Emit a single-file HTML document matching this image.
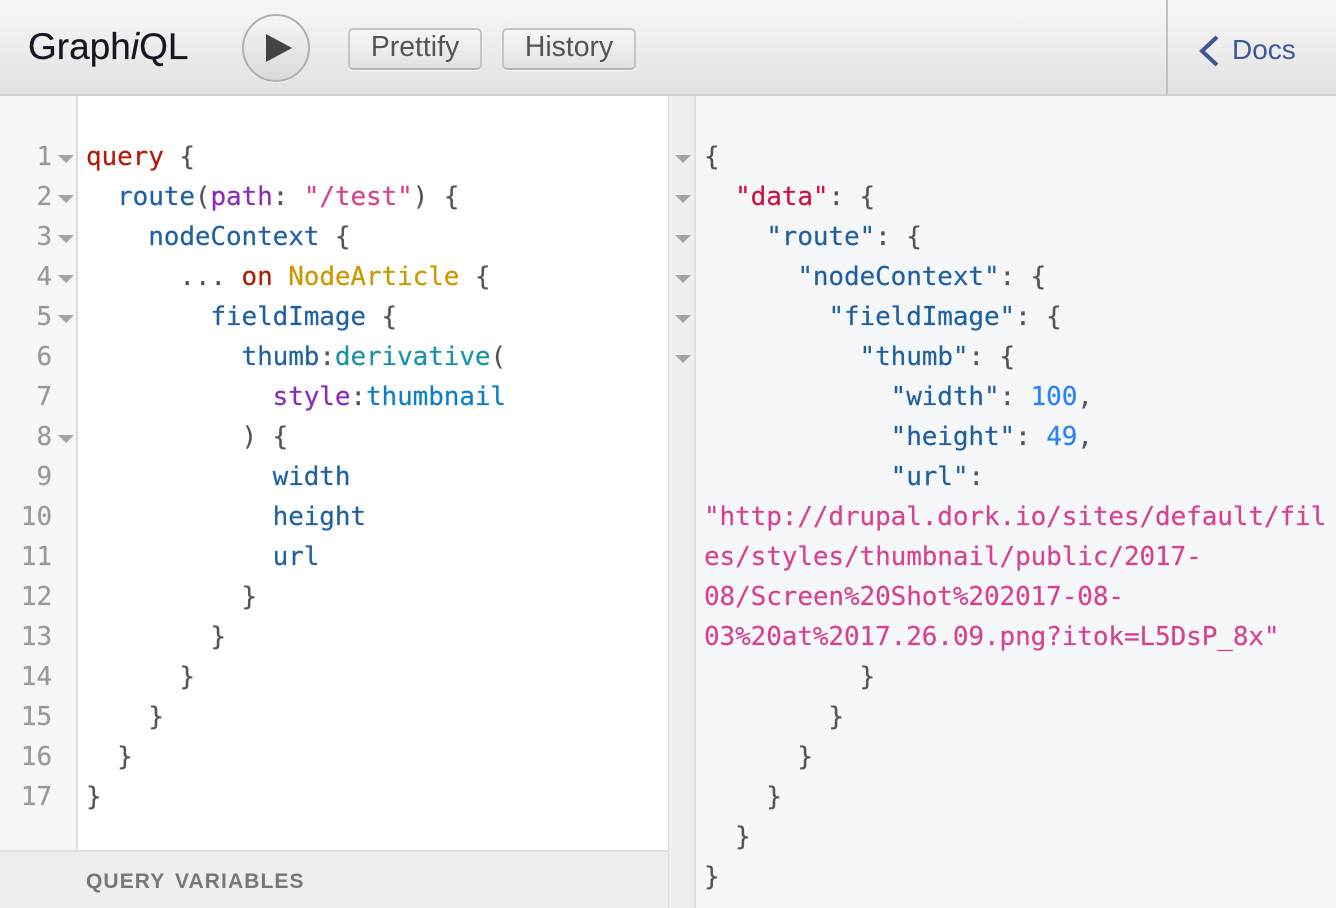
<!DOCTYPE html>
<html><head><meta charset="utf-8">
<style>
html,body{margin:0;padding:0;width:1336px;height:908px;overflow:hidden;background:#f6f7f8}
.abs{position:absolute}
#bar{left:0;top:0;width:1336px;height:94px;background:linear-gradient(#f7f7f7,#e2e2e2);border-bottom:2px solid #d0d0d0}
#logo{left:28px;top:25px;font:37px/44px "Liberation Sans",sans-serif;color:#141823;-webkit-text-stroke:.2px #141823}
.btn{top:28px;height:38px;box-sizing:content-box;border:2px solid #c4c4c4;border-bottom-color:#b5b5b5;border-radius:5px;background:linear-gradient(#f7f7f7,#e2e2e2);box-shadow:0 1px 0 #fff;color:#555;font:28.4px/35px "Liberation Sans",sans-serif;text-align:center}
#sep{left:1166px;top:0;width:2px;height:94px;background:#c0c0c0}
#docs{left:1232px;top:30px;font:28px/40px "Liberation Sans",sans-serif;color:#3b5998}
#gut{left:0;top:96px;width:76px;height:755px;background:#f7f7f7;border-right:2px solid #ddd}
#ed{left:78px;top:96px;width:590px;height:755px;background:#fff}
#qv{left:0;top:850px;width:668px;height:58px;background:#eee;border-top:2px solid #e0e0e0;box-sizing:border-box}
#qvt{left:86px;top:869px;font:bold 21px/26px "Liberation Sans",sans-serif;color:#777;letter-spacing:1.1px;word-spacing:3px}
#div{left:668px;top:96px;width:25px;height:812px;background:#eee;border-left:1px solid #e0e0e0;border-right:2px solid #e0e0e0;box-sizing:content-box}
.l,.n{position:absolute;font:26px/40px "DejaVu Sans Mono","Liberation Mono",monospace;white-space:pre;height:40px;color:#555;letter-spacing:-.1px;-webkit-text-stroke:.2px currentColor}
.n{left:0;width:52px;text-align:right;color:#999}
.k{color:#b11a04}.f{color:#1f61a0}.a{color:#8b2bb9}.s{color:#d64292}.t{color:#ca9800}
.al{color:#1c92a9}.v{color:#0b7fc7}.d{color:#d01040}.i{color:#2882f9}
.tri{position:absolute;width:0;height:0;border-left:8px solid transparent;border-right:8px solid transparent;border-top:8px solid #a5a5a5}
</style></head><body>
<div class="abs" id="bar"></div>
<div class="abs" id="logo">Graph<i>i</i>QL</div>
<svg class="abs" style="left:240px;top:12px" width="72" height="72" viewBox="0 0 72 72">
<defs><linearGradient id="g" x1="0" y1="0" x2="0" y2="1"><stop offset="0" stop-color="#f7f7f7"/><stop offset="1" stop-color="#d9d9d9"/></linearGradient></defs>
<circle cx="36" cy="37" r="33.5" fill="#fff"/>
<circle cx="36" cy="36" r="33" fill="url(#g)" stroke="#b0b0b0" stroke-width="2"/>
<path d="M26 22 L52 36 L26 50 Z" fill="#444"/>
</svg>
<div class="abs btn" style="left:348px;width:130px">Prettify</div>
<div class="abs btn" style="left:502px;width:130px">History</div>
<div class="abs" id="sep"></div>
<svg class="abs" style="left:1196px;top:34px" width="26" height="34" viewBox="0 0 26 34"><path d="M21 3 L6 17 L21 31" fill="none" stroke="#3b5998" stroke-width="4"/></svg>
<div class="abs" id="docs">Docs</div>

<div class="abs" id="gut"></div>
<div class="abs" id="ed"></div>
<div class="abs" id="qv"></div>
<div class="abs" id="qvt">QUERY VARIABLES</div>
<div class="abs" id="div"></div>

<div class="n" style="top:137px">1</div>
<div class="n" style="top:177px">2</div>
<div class="n" style="top:217px">3</div>
<div class="n" style="top:257px">4</div>
<div class="n" style="top:297px">5</div>
<div class="n" style="top:337px">6</div>
<div class="n" style="top:377px">7</div>
<div class="n" style="top:417px">8</div>
<div class="n" style="top:457px">9</div>
<div class="n" style="top:497px">10</div>
<div class="n" style="top:537px">11</div>
<div class="n" style="top:577px">12</div>
<div class="n" style="top:617px">13</div>
<div class="n" style="top:657px">14</div>
<div class="n" style="top:697px">15</div>
<div class="n" style="top:737px">16</div>
<div class="n" style="top:777px">17</div>

<div class="tri" style="left:58px;top:155px"></div>
<div class="tri" style="left:58px;top:195px"></div>
<div class="tri" style="left:58px;top:235px"></div>
<div class="tri" style="left:58px;top:275px"></div>
<div class="tri" style="left:58px;top:315px"></div>
<div class="tri" style="left:58px;top:435px"></div>

<div class="l" style="left:86px;top:137px"><span class="k">query</span> {</div>
<div class="l" style="left:86px;top:177px">  <span class="f">route</span>(<span class="a">path</span>: <span class="s">"/test"</span>) {</div>
<div class="l" style="left:86px;top:217px">    <span class="f">nodeContext</span> {</div>
<div class="l" style="left:86px;top:257px">      ... <span class="k">on</span> <span class="t">NodeArticle</span> {</div>
<div class="l" style="left:86px;top:297px">        <span class="f">fieldImage</span> {</div>
<div class="l" style="left:86px;top:337px">          <span class="f">thumb</span>:<span class="al">derivative</span>(</div>
<div class="l" style="left:86px;top:377px">            <span class="a">style</span>:<span class="v">thumbnail</span></div>
<div class="l" style="left:86px;top:417px">          ) {</div>
<div class="l" style="left:86px;top:457px">            <span class="f">width</span></div>
<div class="l" style="left:86px;top:497px">            <span class="f">height</span></div>
<div class="l" style="left:86px;top:537px">            <span class="f">url</span></div>
<div class="l" style="left:86px;top:577px">          }</div>
<div class="l" style="left:86px;top:617px">        }</div>
<div class="l" style="left:86px;top:657px">      }</div>
<div class="l" style="left:86px;top:697px">    }</div>
<div class="l" style="left:86px;top:737px">  }</div>
<div class="l" style="left:86px;top:777px">}</div>

<div class="tri" style="left:675px;top:155px"></div>
<div class="tri" style="left:675px;top:195px"></div>
<div class="tri" style="left:675px;top:235px"></div>
<div class="tri" style="left:675px;top:275px"></div>
<div class="tri" style="left:675px;top:315px"></div>
<div class="tri" style="left:675px;top:355px"></div>

<div class="l" style="left:704px;top:137px">{</div>
<div class="l" style="left:704px;top:177px">  <span class="d">"data"</span>: {</div>
<div class="l" style="left:704px;top:217px">    <span class="f">"route"</span>: {</div>
<div class="l" style="left:704px;top:257px">      <span class="f">"nodeContext"</span>: {</div>
<div class="l" style="left:704px;top:297px">        <span class="f">"fieldImage"</span>: {</div>
<div class="l" style="left:704px;top:337px">          <span class="f">"thumb"</span>: {</div>
<div class="l" style="left:704px;top:377px">            <span class="f">"width"</span>: <span class="i">100</span>,</div>
<div class="l" style="left:704px;top:417px">            <span class="f">"height"</span>: <span class="i">49</span>,</div>
<div class="l" style="left:704px;top:457px">            <span class="f">"url"</span>:</div>
<div class="l s" style="left:704px;top:497px">"http://drupal.dork.io/sites/default/fil</div>
<div class="l s" style="left:704px;top:537px">es/styles/thumbnail/public/2017-</div>
<div class="l s" style="left:704px;top:577px">08/Screen%20Shot%202017-08-</div>
<div class="l s" style="left:704px;top:617px">03%20at%2017.26.09.png?itok=L5DsP_8x"</div>
<div class="l" style="left:704px;top:657px">          }</div>
<div class="l" style="left:704px;top:697px">        }</div>
<div class="l" style="left:704px;top:737px">      }</div>
<div class="l" style="left:704px;top:777px">    }</div>
<div class="l" style="left:704px;top:817px">  }</div>
<div class="l" style="left:704px;top:857px">}</div>
</body></html>
